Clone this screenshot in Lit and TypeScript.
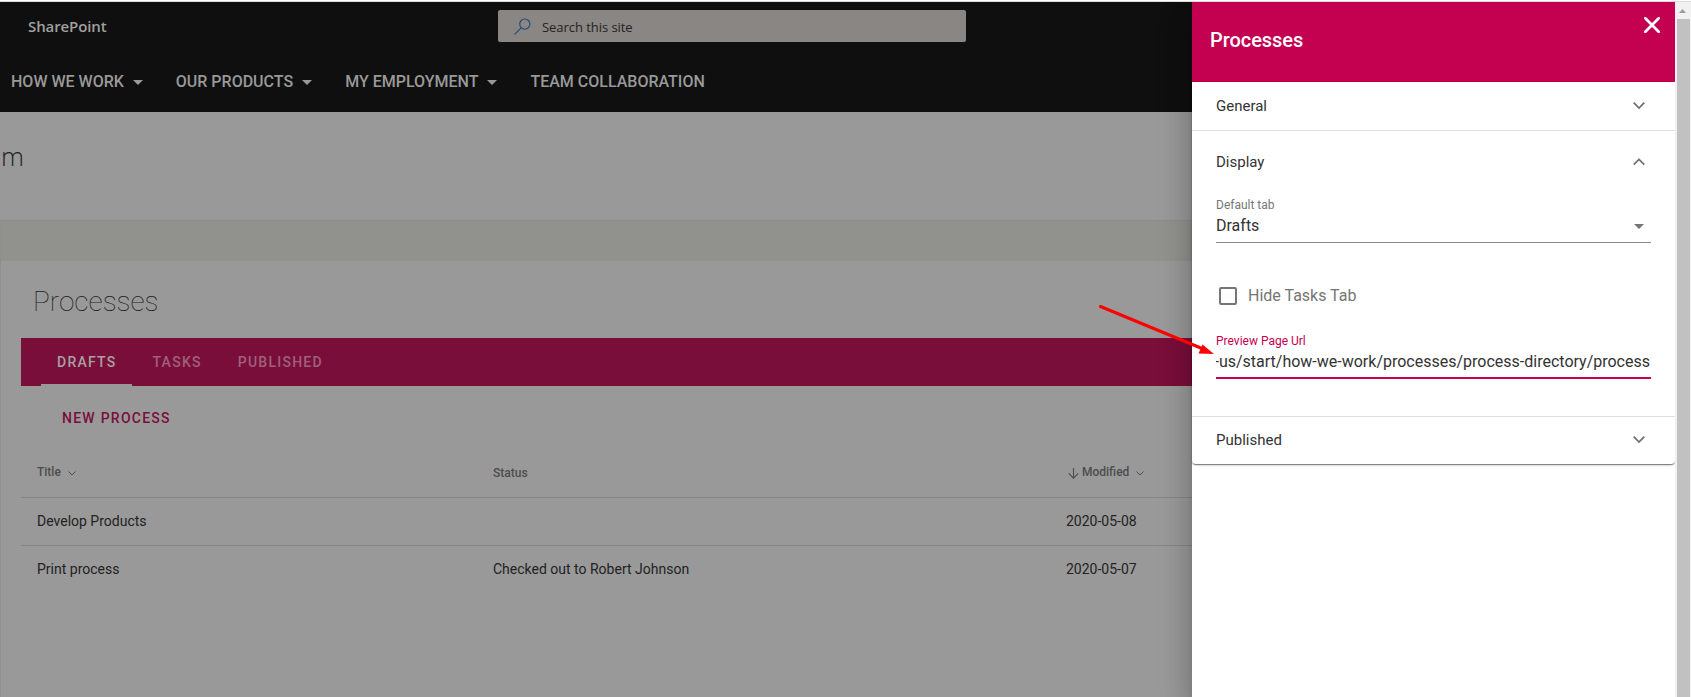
import { LitElement, html, css, svg } from "lit";
import { customElement } from "lit/decorators.js";

const chevron = (w: number, h: number, sw: number, up = false) => html`
  <svg width=${w} height=${h} viewBox="0 0 12 7.4" fill="none" stroke="currentColor" stroke-width=${sw}>
    ${up ? svg`<path d="M.7 6.7 6 1.4l5.3 5.3" />` : svg`<path d="M.7.7 6 6 11.3.7" />`}
  </svg>`;

const caret = html`<svg class="caret" width="10" height="5" viewBox="0 0 10 5"><path d="M0 0h10L5 5z" fill="currentColor" /></svg>`;

@customElement("site-page")
class SitePage extends LitElement {
  static styles = css`
    :host { display: flex; flex-direction: column; height: 100%; background: #999; overflow: hidden; }
    header { background: #0f0f0f; height: 110px; flex: none; color: #999; }
    .suite { height: 48px; display: flex; align-items: center; padding-left: 28px; }
    .brand { width: 470px; flex: none; font: 600 15px/20px "Open Sans", sans-serif; letter-spacing: -0.1px; color: #a0a0a0; }
    .search { width: 468px; height: 32px; border-radius: 2px; background: #898683; display: flex; align-items: center;
      box-sizing: border-box; padding-left: 16px; color: #242322; font: 13px/20px "Open Sans", sans-serif; letter-spacing: -0.05px; }
    .search svg { margin-right: 11px; }
    .search span { padding-top: 2px; }
    nav { height: 62px; display: flex; align-items: center; padding: 1px 0 0 11px; box-sizing: border-box; font-weight: 500; font-size: 16px; white-space: nowrap; }
    nav span { display: flex; align-items: center; }
    nav .caret { margin: 1px 33px 0 9px; }
    .site { height: 108px; flex: none; box-sizing: border-box; padding: 24px 0 0 1px; font: 300 26px/40px "Open Sans", sans-serif; color: #222; }
    .canvas { flex: 1; border-left: 1px solid #8f8f8f; border-top: 1px solid #8d8d8d; }
    .band { height: 40px; background: #91918d; }
    h1 { margin: 21px 0 16px 32px; font-weight: 100; font-size: 28px; line-height: 40px; color: #1c1c1c; }
    .part { margin-left: 20px; }
    .tabs { background: #790e3a; height: 48px; padding-left: 20px; display: flex; font-weight: 500; font-size: 14px;
      letter-spacing: 1.25px; line-height: 48px; color: #a0607a; gap: 4px; }
    .tab { padding: 0 16px; height: 48px; box-sizing: border-box; }
    .on { color: #a8a0a3; border-bottom: 2px solid #999; }
    .new { color: #790e3a; font-weight: 500; font-size: 14px; letter-spacing: 1.25px; line-height: 20px; padding: 22px 0 0 41px; height: 63px; box-sizing: border-box; }
    .row { display: grid; grid-template-columns: 456px 573px 1fr; height: 48px; box-sizing: border-box; padding-left: 16px;
      border-bottom: 1px solid #858585; line-height: 47px; font-size: 14px; color: #222; }
    .row.last { border: 0; }
    .head { font-size: 12px; font-weight: 500; color: #4d4d4d; height: 49px; line-height: 47px; }
    .cell { display: flex; align-items: center; height: 46px; }
    .cell svg { margin-left: 7px; margin-top: 3px; }
    .cell .sort { margin: 3px 3px 0 2px; }
    .status { padding-top: 1px; }
  `;
  render() {
    return html`
      <header>
        <div class="suite">
          <div class="brand">SharePoint</div>
          <div class="search">
            <svg width="17" height="17" viewBox="0 0 17 17" fill="none" stroke="#1f4b74" stroke-width="1.1">
              <circle cx="10.8" cy="6.1" r="5.1" /><path d="M7.2 9.8.6 16.4" />
            </svg><span>Search this site</span>
          </div>
        </div>
        <nav>
          <span>HOW WE WORK${caret}</span><span>OUR PRODUCTS${caret}</span>
          <span>MY EMPLOYMENT${caret}</span><span>TEAM COLLABORATION</span>
        </nav>
      </header>
      <div class="site">m</div>
      <div class="canvas">
        <div class="band"></div>
        <h1>Processes</h1>
        <div class="part">
          <div class="tabs">
            <div class="tab on">DRAFTS</div><div class="tab">TASKS</div><div class="tab">PUBLISHED</div>
          </div>
          <div class="new">NEW PROCESS</div>
          <div class="row head">
            <div class="cell">Title ${chevron(8, 5, 1.5)}</div>
            <div class="status">Status</div>
            <div class="cell">
              <svg class="sort" width="11" height="11" viewBox="0 0 11 11" fill="none" stroke="currentColor" stroke-width="1.1"><path d="M5.5 0v10M.8 5.4l4.7 4.8 4.7-4.8" /></svg>Modified
              ${chevron(8, 5, 1.5)}
            </div>
          </div>
          <div class="row"><div>Develop Products</div><div></div><div>2020-05-08</div></div>
          <div class="row last"><div>Print process</div><div>Checked out to Robert Johnson</div><div>2020-05-07</div></div>
        </div>
      </div>`;
  }
}

@customElement("settings-panel")
class SettingsPanel extends LitElement {
  static styles = css`
    :host { display: block; height: 100%; background: #fff; color: #333; position: relative;
      box-shadow: 0 8px 10px -5px rgba(0,0,0,.2), 0 16px 24px 2px rgba(0,0,0,.14), 0 6px 30px 5px rgba(0,0,0,.12); clip-path: inset(0 0 0 -60px); }
    header { height: 80px; background: #c40050; color: #fff; display: flex; justify-content: space-between; box-sizing: border-box; padding: 15px 15px 0 18px; }
    h2 { margin: 11px 0 0; font-weight: 500; font-size: 20px; line-height: 24px; letter-spacing: -.05px; }
    .card { border-radius: 0 0 4px 4px; height: 382px; box-shadow: 0 2px 1px -1px rgba(0,0,0,.3), 0 1px 1px rgba(0,0,0,.2), 0 1px 3px rgba(0,0,0,.2); }
    .bar { display: flex; justify-content: space-between; align-items: center; height: 48px; padding: 0 30px 0 24px; font-size: 15px; color: #333; }
    .bar svg { color: #6e6e6e; }
    .bar.end { height: 46px; }
    .line { border-bottom: 1px solid #dedede; }
    .display { height: 286px; padding-top: 8px; box-sizing: border-box; }
    .display .bar { height: 46px; }
    .fields { padding: 12px 24px 0; }
    .label { font-size: 12px; line-height: 16px; color: #767676; }
    .select { display: flex; justify-content: space-between; align-items: center; border-bottom: 1px solid #8a8a8a; font-size: 16px; line-height: 24px; height: 30px; padding: 0 7px 0 0; box-sizing: border-box; }
    .select span { margin-top: -3px; } .select svg { color: #757575; margin-top: -3px; }
    .check { display: flex; align-items: center; height: 20px; margin: 43px 0 27px 3px; font-size: 16px; color: #757575; gap: 11px; }
    .check span { padding-bottom: 2px; }
    .box { width: 18px; height: 18px; border: 2px solid #757575; border-radius: 2px; box-sizing: border-box; }
    .accent { color: #c40050; }
    .url { font-size: 16px; line-height: 26px; height: 28px; border-bottom: 2px solid #c40050; overflow: hidden; display: flex; justify-content: flex-end; padding-right: 1px; white-space: nowrap; }
  `;
  render() {
    return html`
      <header>
        <h2>Processes</h2>
        <svg width="16" height="16" viewBox="0 0 16 16" fill="none" stroke="#fff" stroke-width="2.7"><path d="m1.3 1.3 13.4 13.4M14.7 1.3 1.3 14.7" stroke-linecap="round" /></svg>
      </header>
      <div class="card">
        <div class="bar line"><span>General</span>${chevron(12, 7.4, 1.7)}</div>
        <div class="display line">
          <div class="bar"><span>Display</span>${chevron(12, 7.4, 1.7, true)}</div>
          <div class="fields">
            <div class="label">Default tab</div>
            <div class="select"><span>Drafts</span>${caret}</div>
            <div class="check"><div class="box"></div><span>Hide Tasks Tab</span></div>
            <div class="label accent">Preview Page Url</div>
            <div class="url">-us/start/how-we-work/processes/process-directory/process</div>
          </div>
        </div>
        <div class="bar end"><span>Published</span>${chevron(12, 7.4, 1.7)}</div>
      </div>`;
  }
}

@customElement("app-root")
class AppRoot extends LitElement {
  static styles = css`
    :host { display: block; width: 1691px; height: 697px; box-sizing: border-box; overflow: hidden; position: relative;
      background: #fff; font-family: Roboto, "Noto Sans", sans-serif; }
    .edge { height: 1px; border-bottom: 1px solid #dadcdc; }
    .view { display: grid; grid-template-columns: 1192px 483px 16px; height: 695px; }
    .view > * { min-width: 0; }
    .scroll { background: #f1f1f1; display: flex; flex-direction: column; align-items: flex-end; padding-right: 1px; }
    .scroll svg { margin: 7px 4px 6px 0; flex: none; }
    .thumb { background: #c1c1c1; width: 13px; flex: 1; }
    .pointer { position: absolute; left: 1095px; top: 300px; }
  `;
  render() {
    return html`
      <div class="edge"></div>
      <div class="view">
        <site-page></site-page>
        <settings-panel></settings-panel>
        <div class="scroll">
          <svg width="7" height="4" viewBox="0 0 7 4"><path d="M3.5 0 7 4H0z" fill="#9c9c9c" /></svg>
          <div class="thumb"></div>
        </div>
      </div>
      <svg class="pointer" width="125" height="60" viewBox="0 0 125 60">
        <path d="M5.5 6.5 107 48.5" stroke="#f00" stroke-width="3" stroke-linecap="round" />
        <path d="M119 54 103.5 53.5 107.5 44.5z" fill="#f00" />
      </svg>`;
  }
}
